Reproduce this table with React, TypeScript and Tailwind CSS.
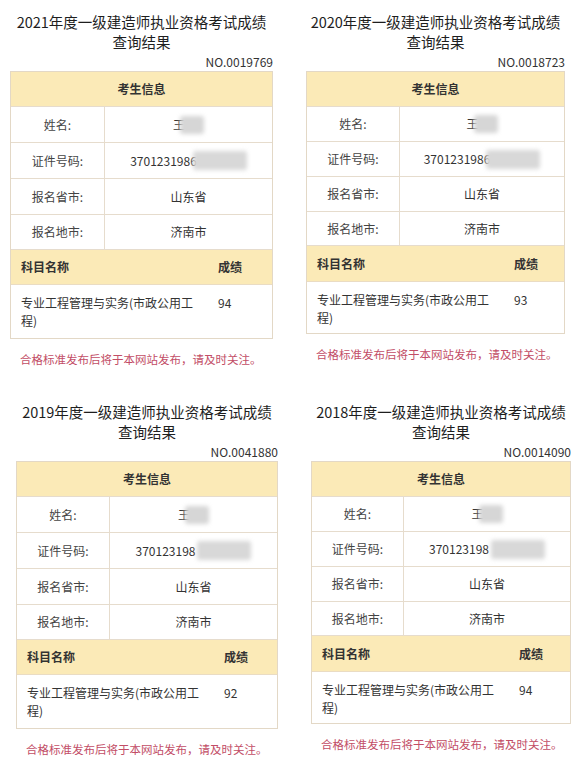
import React from "react";

type P = {
  year: string;
  no: string;
  id: string;
  score: string;
  pad: string;
  width: string;
  labelW: string;
  compact: boolean;
  overlapId: boolean;
};

const panels: P[] = [
  { year: "2021", no: "NO.0019769", id: "3701231986", score: "94", pad: "pl-[10px]", width: "w-[263px]", labelW: "w-[94px]", compact: false, overlapId: true },
  { year: "2020", no: "NO.0018723", id: "3701231986", score: "93", pad: "pl-[16px]", width: "w-[259px]", labelW: "w-[93px]", compact: true, overlapId: true },
  { year: "2019", no: "NO.0041880", id: "370123198", score: "92", pad: "pl-[16px]", width: "w-[262px]", labelW: "w-[93px]", compact: false, overlapId: false },
  { year: "2018", no: "NO.0014090", id: "370123198", score: "94", pad: "pl-[21px]", width: "w-[260px]", labelW: "w-[92px]", compact: true, overlapId: false },
];

function Row({ label, children, h, labelW }: { label: string; children: React.ReactNode; h: string; labelW: string }) {
  return (
    <div className={`flex ${h} border-b border-[#e6dccd]`}>
      <div className={`${labelW} shrink-0 flex items-center justify-center border-r border-[#e6dccd] text-[#444]`}>{label}</div>
      <div className="flex-1 flex items-center justify-center text-[#333]">{children}</div>
    </div>
  );
}

function Panel({ p }: { p: P }) {
  const rh = p.compact ? "h-[35px]" : "h-[36px]";
  return (
    <div className={`${p.pad} pt-[12px]`}>
      <div className={`${p.width} flex flex-col`}>
        <div className="text-center text-[14.5px] leading-[20px] text-[#1e1e1e]">
          <div className="whitespace-nowrap">{p.year}年度一级建造师执业资格考试成绩</div>
          <div>查询结果</div>
        </div>
        <div className="mt-[2px] text-right text-[12px] leading-[16px] text-[#333]">{p.no}</div>
        <div className="mt-[1px] border border-[#e3d8c6] text-[12px]">
          <div className="h-[35px] flex items-center justify-center bg-[#fbeab7] border-b border-[#e6dccd] font-bold text-[#333]">考生信息</div>
          <Row label="姓名:" h={rh} labelW={p.labelW}>
            <span className="flex items-center">
              <span>王</span>
              <span className="-ml-[5px] w-[24px] h-[18px] rounded-[3px] bg-[#d6d6d6] blur-[2px]"></span>
            </span>
          </Row>
          <Row label="证件号码:" h={rh} labelW={p.labelW}>
            <span className="flex items-center">
              <span>{p.id}</span>
              <span className={`${p.overlapId ? "-ml-[4px]" : "ml-[2px]"} w-[54px] h-[19px] rounded-[3px] bg-[#d8d8d8] blur-[2px]`}></span>
            </span>
          </Row>
          <Row label="报名省市:" h={rh} labelW={p.labelW}>山东省</Row>
          <Row label="报名地市:" h={p.compact ? "h-[34px]" : "h-[35px]"} labelW={p.labelW}>济南市</Row>
          <div className={`${p.compact ? "h-[36px]" : "h-[35px]"} flex items-center bg-[#fbeab7] border-b border-[#eadcc3] font-bold text-[#333]`}>
            <div className="w-[207px] pl-[10px]">科目名称</div>
            <div>成绩</div>
          </div>
          <div className={`${p.compact ? "h-[51px]" : "h-[53px]"} flex pt-[9px] leading-[18px] text-[#333]`}>
            <div className="w-[207px] pl-[10px] pr-[22px]">专业工程管理与实务(市政公用工程)</div>
            <div>{p.score}</div>
          </div>
        </div>
        <div className="mt-[12px] text-[11.5px] leading-[16px] text-[#c24d66] whitespace-nowrap pl-[10px]">合格标准发布后将于本网站发布，请及时关注。</div>
      </div>
    </div>
  );
}

export default function App() {
  return (
    <div className="w-[580px] h-[767px] bg-white font-['Noto_Sans_CJK_SC','Noto_Sans',sans-serif] grid grid-cols-2 grid-rows-[390px_377px] overflow-hidden">
      {panels.map((p) => (
        <Panel key={p.year} p={p} />
      ))}
    </div>
  );
}
